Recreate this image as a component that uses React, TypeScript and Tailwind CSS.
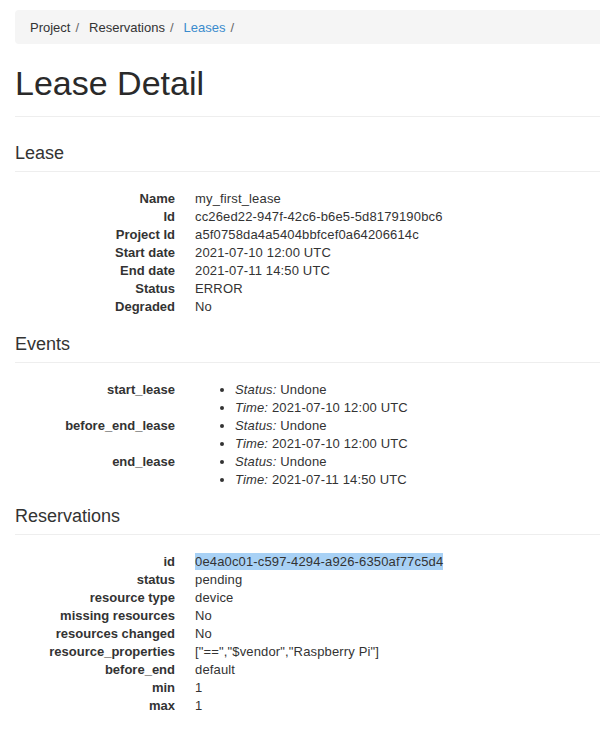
import React from "react";

const leaseRows: [string, string][] = [
  ["Name", "my_first_lease"],
  ["Id", "cc26ed22-947f-42c6-b6e5-5d8179190bc6"],
  ["Project Id", "a5f0758da4a5404bbfcef0a64206614c"],
  ["Start date", "2021-07-10 12:00 UTC"],
  ["End date", "2021-07-11 14:50 UTC"],
  ["Status", "ERROR"],
  ["Degraded", "No"],
];

const events: [string, string][] = [
  ["start_lease", "2021-07-10 12:00 UTC"],
  ["before_end_lease", "2021-07-10 12:00 UTC"],
  ["end_lease", "2021-07-11 14:50 UTC"],
];

const resRows: [string, string][] = [
  ["status", "pending"],
  ["resource type", "device"],
  ["missing resources", "No"],
  ["resources changed", "No"],
  ["resource_properties", '["==","$vendor","Raspberry Pi"]'],
  ["before_end", "default"],
  ["min", "1"],
  ["max", "1"],
];

function Row({ label, children }: { label: string; children: React.ReactNode }) {
  return (
    <div className="flex">
      <dt className="w-[160px] shrink-0 text-right font-bold whitespace-nowrap overflow-hidden">{label}</dt>
      <dd className="ml-[20px] tracking-[0.15px]">{children}</dd>
    </div>
  );
}

function SectionHeading({ children }: { children: React.ReactNode }) {
  return (
    <h3 className="text-[18px] leading-[20px] pb-[8px] border-b border-[#eeeeee] font-normal">{children}</h3>
  );
}

export default function App() {
  return (
    <div
      className="w-[600px] min-h-[756px] bg-white text-[#333333] text-[13px] leading-[18px] overflow-hidden"
      style={{ fontFamily: '"Liberation Sans", Arial, Helvetica, sans-serif' }}
    >
      <div className="pl-[15px]">
        <nav className="mt-[10px] h-[34px] pt-[1px] bg-[#f5f5f5] rounded-l-[4px] px-[15px] flex items-center">
          <span>Project</span>
          <span className="px-[5px] text-[#666]">/</span>
          <span className="ml-[5px]">Reservations</span>
          <span className="px-[5px] text-[#666]">/</span>
          <span className="ml-[5px] text-[#3a8bcd]">Leases</span>
          <span className="px-[5px] text-[#666]">/</span>
        </nav>

        <h1 className="mt-[19px] text-[34px] leading-[40px] pb-[13px] border-b border-[#eeeeee] font-normal text-[#2a2a2a]">
          Lease Detail
        </h1>

        <div className="mt-[26px]">
          <SectionHeading>Lease</SectionHeading>
        </div>
        <dl className="mt-[18px]">
          {leaseRows.map(([k, v]) => (
            <Row key={k} label={k}>
              {v}
            </Row>
          ))}
        </dl>

        <div className="mt-[18px]">
          <SectionHeading>Events</SectionHeading>
        </div>
        <dl className="mt-[18px]">
          {events.map(([k, t]) => (
            <Row key={k} label={k}>
              <ul className="list-disc pl-[40px]">
                <li>
                  <em>Status:</em> Undone
                </li>
                <li>
                  <em>Time:</em> {t}
                </li>
              </ul>
            </Row>
          ))}
        </dl>

        <div className="mt-[17px]">
          <SectionHeading>Reservations</SectionHeading>
        </div>
        <dl className="mt-[18px]">
          <Row label="id">
            <span className="bg-[#a8d1f5] py-[1px]">0e4a0c01-c597-4294-a926-6350af77c5d4</span>
          </Row>
          {resRows.map(([k, v]) => (
            <Row key={k} label={k}>
              {v}
            </Row>
          ))}
        </dl>
      </div>
    </div>
  );
}
